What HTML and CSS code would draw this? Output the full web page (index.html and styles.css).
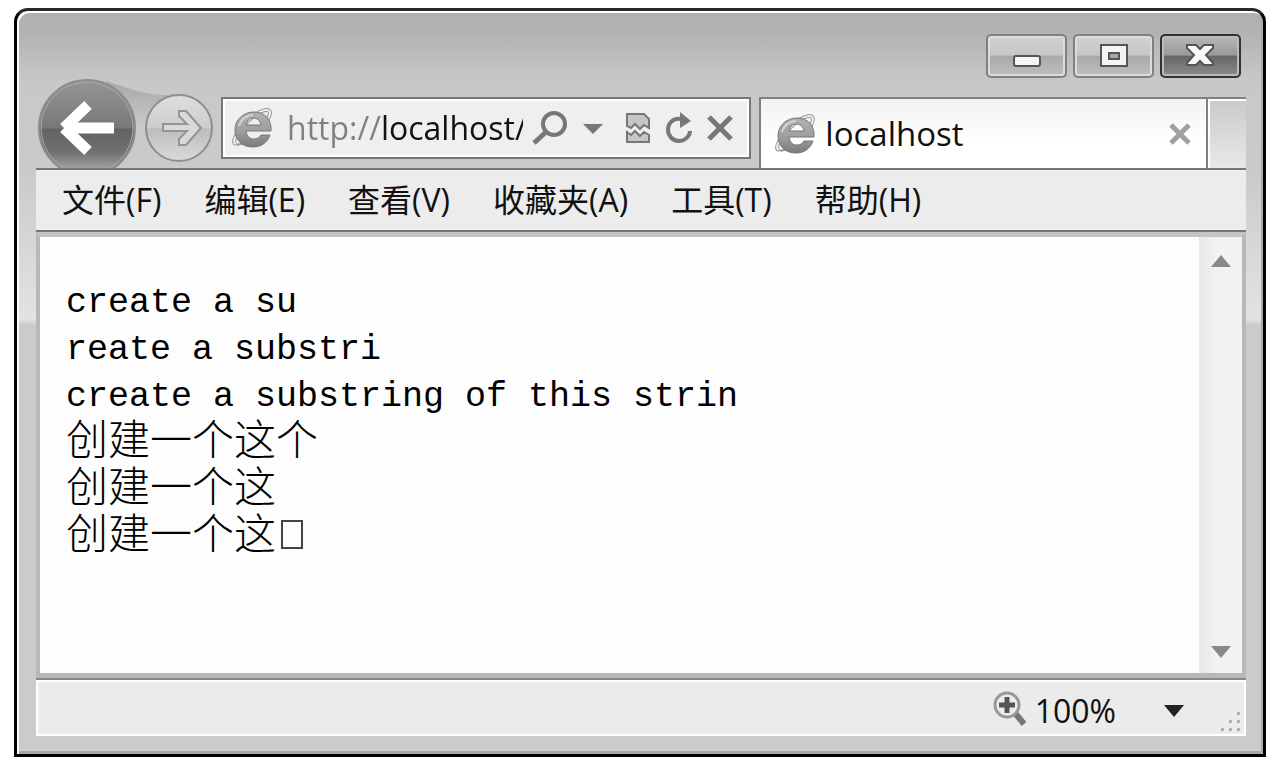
FILE: index.html
```html
<!DOCTYPE html>
<html lang="zh-CN">
<head>
<meta charset="utf-8">
<title>localhost</title>
<link rel="stylesheet" href="styles.css">
</head>
<body>
<svg class="defs" width="0" height="0" aria-hidden="true">
  <defs>
    <linearGradient id="ie-g" x1="0" y1="0" x2="0" y2="1"><stop offset="0" stop-color="#b0b0b0"/><stop offset=".5" stop-color="#a0a0a0"/><stop offset="1" stop-color="#7c7c7c"/></linearGradient>
    <symbol id="ie" viewBox="0 0 42 42">
      <path d="M5 37C-1 35 8 22 19 12S39 1 39 6c0 3-2 6-3 8" fill="none" stroke="#999" stroke-width="4"/>
      <path d="M5 37C-1 35 8 22 19 12S39 1 39 6c0 3-2 6-3 8" fill="none" stroke="#eee" stroke-width="2"/>
      <path d="M5 37c3 2 8-1 13-4" fill="none" stroke="#999" stroke-width="2"/>
      <path d="M40 24H15c1 6 4 8 8 8 3 0 5-1 7-4h9c-3 8-9 12-17 12C11 40 4 33 4 23S12 5 23 5c11 0 18 8 17 19zM15 18h15c-1-5-4-7-8-7s-6 3-7 7z" fill="url(#ie-g)" stroke="#777" stroke-width="1"/>
      <path d="M8 19C10 12 16 8 22 8" fill="none" stroke="#d0d0d0" stroke-width="2"/>
    </symbol>
  </defs>
</svg>
<div class="window">
  <header class="caption">
    <button class="cap" aria-label="最小化"><svg width="30" height="28"><rect x="2" y="14" width="26" height="10" rx="2" fill="#f4f4f4" stroke="#555" stroke-width="2"/></svg></button>
    <button class="cap" aria-label="最大化"><svg width="30" height="28"><path d="M2 3h26v21H2z" fill="#f4f4f4" stroke="#555" stroke-width="2"/><path d="M10 11h10v6H10z" fill="#aaa" stroke="#555" stroke-width="2"/></svg></button>
    <button class="cap cap-close" aria-label="关闭"><svg width="32" height="28"><path d="M2 3h9l4 4 4-4h9v3l-7 7 7 8v2h-9l-4-4-4 4H2v-2l7-8-7-7z" fill="#f8f8f8" stroke="#555" stroke-width="2"/></svg></button>
  </header>
  <nav class="nav">
    <button class="back" aria-label="后退">
      <svg width="109" height="90">
        <defs>
          <linearGradient id="bk" x1="0" y1="0" x2="0" y2="1"><stop offset="0" stop-color="#959595"/><stop offset=".5" stop-color="#787878"/><stop offset=".51" stop-color="#626262"/><stop offset=".75" stop-color="#707070"/><stop offset="1" stop-color="#b5b5b5"/></linearGradient>
          <linearGradient id="sw" x1="0" y1="0" x2="0" y2="1"><stop offset="0" stop-color="#a8a8a8"/><stop offset="1" stop-color="#cacaca"/></linearGradient>
        </defs>
        <path d="M70 3C98 12 108 17 132 17L104 50H80z" fill="url(#sw)"/>
        <circle cx="51" cy="50" r="48" fill="url(#bk)" stroke="#8d8d8d" stroke-width="2"/>
        <circle cx="51" cy="50" r="46" fill="none" stroke="#aaa" stroke-width="1"/>
        <path d="M28 50L52 27M28 50L52 73M30 50H78" fill="none" stroke="#fff" stroke-width="11"/>
      </svg>
    </button>
    <button class="forward" aria-label="前进">
      <svg width="70" height="90">
        <defs><linearGradient id="fw" x1="0" y1="0" x2="0" y2="1"><stop offset="0" stop-color="#dedede"/><stop offset=".5" stop-color="#cdcdcd"/><stop offset=".51" stop-color="#bdbdbd"/><stop offset="1" stop-color="#dadada"/></linearGradient></defs>
        <circle cx="34" cy="50" r="33" fill="url(#fw)" stroke="#8e8e8e" stroke-width="2"/>
        <path d="M18 46h24l-8-8v-5h7l15 17-15 17h-7v-6l8-8H18z" fill="#d9d9d9" stroke="#949494" stroke-width="2"/>
      </svg>
    </button>
    <div class="address">
      <svg width="42" height="42" aria-hidden="true"><use href="#ie"/></svg>
      <input class="url" type="text" value="http://localhost/" aria-label="地址">
      <button aria-label="搜索"><svg width="38" height="38"><circle cx="23" cy="15" r="11" fill="none" stroke="#777" stroke-width="4"/><path d="M15 23L3 34" stroke="#777" stroke-width="5"/></svg></button>
      <button aria-label="显示地址列表"><svg width="20" height="12"><path d="M0 2h20L10 12z" fill="#777"/></svg></button>
      <button class="compat" aria-label="兼容性视图"><svg width="26" height="32"><path d="M2 14V2h17l5 5v9l-5-3-4 4-5-5-4 4z" fill="#c6c6c6" stroke="#777" stroke-width="2"/><path d="M2 20l4 3 4-4 5 5 4-4 5 3v7H2z" fill="#c6c6c6" stroke="#777" stroke-width="2"/></svg></button>
      <button aria-label="刷新"><svg width="28" height="34"><path d="M16 8C8 7 3 12 3 19c0 6 5 11 11 11s11-5 11-10" fill="none" stroke="#777" stroke-width="4"/><path d="M15 1l11 9-11 7z" fill="#777"/></svg></button>
      <button aria-label="停止"><svg width="26" height="28"><path d="M2 3l22 22M24 3L2 25" stroke="#777" stroke-width="5"/></svg></button>
    </div>
    <div class="tab">
      <svg width="42" height="42" aria-hidden="true"><use href="#ie"/></svg>
      <span class="tab-title">localhost</span>
      <button aria-label="关闭选项卡"><svg width="22" height="22"><path d="M2 2l18 18M20 2L2 20" stroke="#a0a0a0" stroke-width="5"/></svg></button>
    </div>
    <button class="newtab" aria-label="新建选项卡"></button>
  </nav>
  <div class="menubar">
    <button>文件(F)</button>
    <button>编辑(E)</button>
    <button>查看(V)</button>
    <button>收藏夹(A)</button>
    <button>工具(T)</button>
    <button>帮助(H)</button>
  </div>
  <div class="view">
    <main class="page">
      <p>create a su</p>
      <p>reate a substri</p>
      <p>create a substring of this strin</p>
      <p>创建一个这个</p>
      <p>创建一个这</p>
      <p>创建一个这<span class="tofu"></span></p>
    </main>
    <div class="scroll">
      <button aria-label="向上滚动"><svg width="20" height="12"><path d="M0 12h20L10 0z" fill="#888"/></svg></button>
      <button aria-label="向下滚动"><svg width="20" height="12"><path d="M0 0h20L10 12z" fill="#888"/></svg></button>
    </div>
  </div>
  <footer class="status">
    <button class="zoom">
      <svg width="34" height="40" aria-hidden="true"><path d="M22 22l9 11" stroke="#777" stroke-width="6"/><circle cx="14" cy="14" r="12" fill="#eee" stroke="#999" stroke-width="3"/><path d="M14 6v16M6 14h16" stroke="#555" stroke-width="5"/></svg>
      <span>100%</span>
      <svg class="zoom-arrow" width="20" height="12" aria-hidden="true"><path d="M0 0h20L10 12z" fill="#222"/></svg>
    </button>
    <svg class="grip" width="22" height="24" aria-hidden="true"><path d="M18 2h3v3h-3zM10 10h3v3h-3zM18 10h3v3h-3zM2 18h3v3H2zM10 18h3v3h-3zM18 18h3v3h-3z" fill="#b0b0b0"/></svg>
  </footer>
</div>
</body>
</html>
```
FILE: styles.css
```css
* { box-sizing: border-box; }
body {
  margin: 0;
  min-height: 100vh;
  padding: 8px 14px 14px;
  display: flex;
  background: #fff;
  font-family: "Open Sans", "Noto Sans CJK SC", sans-serif;
  color: #111;
}
.defs { position: absolute; }
svg { display: block; flex: none; }
button {
  margin: 0;
  padding: 0;
  border: 0;
  background: none;
  font: inherit;
  color: inherit;
}
.window {
  flex: 1;
  min-width: 0;
  display: flex;
  flex-direction: column;
  padding: 0 17px 18px 19px;
  border: 3px solid #000;
  border-top-color: #2a2a2a;
  border-radius: 14px 14px 0 0;
  background: linear-gradient(#b0b0b0 0, #b2b2b2 20px, #c8c8c8 70px, #cacaca 160px, #e3e3e3 308px, #cbcbcb 314px);
  box-shadow: inset 2px 2px 0 #fff, inset -2px -3px 0 #a8a8a8;
}
.caption {
  display: flex;
  justify-content: flex-end;
  gap: 6px;
  padding: 23px 5px 0 0;
}
.cap {
  display: flex;
  align-items: center;
  justify-content: center;
  width: 81px;
  height: 44px;
  border: 2px solid #808080;
  border-radius: 5px;
  background: linear-gradient(#d2d2d2 0, #c6c6c6 48%, #a9a9a9 50%, #bebebe 100%);
  box-shadow: inset 0 0 0 2px #dcdcdc;
}
.cap-close {
  border-color: #333;
  background: linear-gradient(#b8b8b8 0, #999 48%, #666 50%, #8c8c8c 100%);
  box-shadow: inset 0 0 0 2px #bbb;
}
.nav {
  display: flex;
  align-items: flex-end;
  height: 90px;
}
.back { width: 109px; }
.back svg { overflow: visible; }
.forward { width: 76px; position: relative; }
.address {
  flex: 504 1 0;
  min-width: 0;
  height: 62px;
  margin: 0 8px 9px 0;
  display: flex;
  align-items: center;
  gap: 14px;
  padding: 0 16px 0 8px;
  border: 2px solid #777;
  background: #efefef;
  box-shadow: inset 0 0 0 2px #fff;
}
.url {
  flex: 1;
  min-width: 0;
  height: 44px;
  margin: 0 -6px 0 0;
  padding: 0;
  border: 0;
  outline: 0;
  font: 32px/44px "Open Sans", sans-serif;
  color: transparent;
  background: linear-gradient(90deg, #808080 94px, #111 94px);
  -webkit-background-clip: text;
  background-clip: text;
}
.compat { margin-left: 8px; }
.tab {
  flex: 418 1 0;
  min-width: 0;
  height: 71px;
  display: flex;
  align-items: center;
  gap: 9px;
  padding: 0 15px 0 13px;
  border: 2px solid #808080;
  border-bottom: 0;
  background: linear-gradient(#f2f2f2, #fff 60%);
}
.tab-title { flex: 1; font-size: 33px; line-height: 44px; }
.newtab {
  width: 38px;
  height: 71px;
  border-top: 2px solid #808080;
  background: linear-gradient(#cacaca, #e8e8e8);
  box-shadow: inset 2px 2px 0 #fff;
}
.menubar {
  display: flex;
  gap: 43px;
  padding: 8px 26px;
  border-top: 2px solid #777;
  border-bottom: 2px solid #777;
  background: #ececec;
}
.menubar button { font-size: 32px; line-height: 44px; white-space: nowrap; }
.view {
  flex: 1;
  display: flex;
  border: solid #b8b8b8;
  border-width: 5px 4px;
  border-top-color: #c4c4c4;
  background: #fdfdfd;
}
.page {
  flex: 1;
  min-width: 0;
  padding: 43px 26px;
  font-family: "Liberation Mono", "Noto Sans CJK SC", monospace;
  font-size: 35px;
  line-height: 47px;
  color: #000;
}
.page p { margin: 0; }
.page p:nth-child(n+4) { font-size: 42px; font-weight: 300; }
.tofu {
  display: inline-block;
  width: 22px;
  height: 29px;
  margin-left: 5px;
  border: 2px solid #444;
}
.scroll {
  width: 43px;
  display: flex;
  flex-direction: column;
  justify-content: space-between;
  align-items: center;
  padding: 18px 0 15px;
  background: linear-gradient(90deg, #e6e6e6, #f2f2f2 40%);
}
.status {
  display: flex;
  align-items: center;
  justify-content: flex-end;
  gap: 35px;
  height: 56px;
  margin-top: 2px;
  padding: 5px 3px 0;
  border: 2px solid #fff;
  box-shadow: 0 -2px 0 #888;
  background: #ebebeb;
}
.zoom { display: flex; align-items: center; gap: 8px; font-size: 32px; line-height: 44px; }
.zoom-arrow { margin-left: 40px; }
.grip { align-self: flex-end; }
```
